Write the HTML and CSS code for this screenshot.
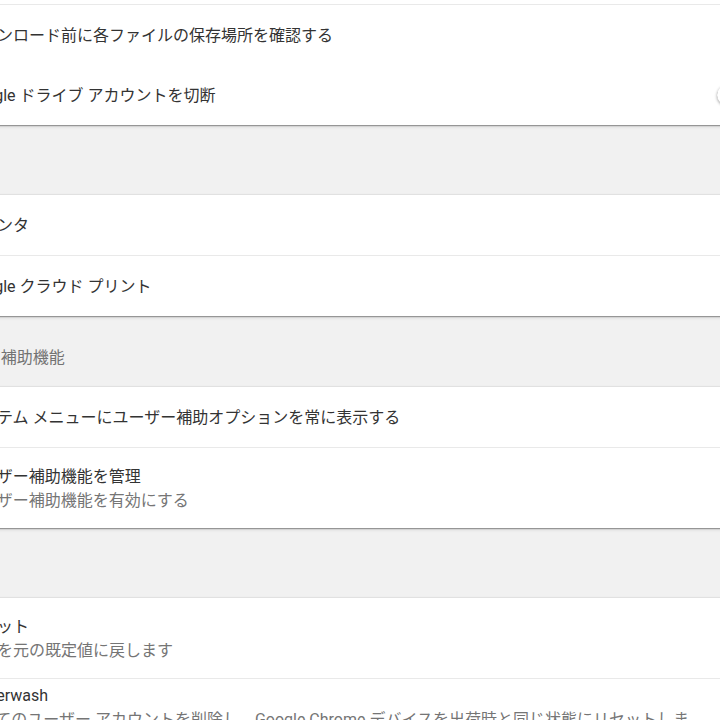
FILE: index.html
```html
<!DOCTYPE html>
<html lang="ja">
<head>
<meta charset="utf-8">
<title>設定</title>
<link rel="stylesheet" href="styles.css">
</head>
<body>
<main class="page">
  <section class="card">
    <div class="row">
      <div class="text"><div class="title">ダウンロード先</div></div>
    </div>
    <div class="row">
      <div class="text"><div class="title">ダウンロード前に各ファイルの保存場所を確認する</div></div>
    </div>
    <div class="row flush">
      <div class="text"><div class="title">Google ドライブ アカウントを切断</div></div>
      <div class="toggle"><span class="knob"></span></div>
    </div>
  </section>

  <h2 class="heading">印刷</h2>
  <section class="card">
    <div class="row">
      <div class="text"><div class="title">プリンタ</div></div>
    </div>
    <div class="row">
      <div class="text"><div class="title">Google クラウド プリント</div></div>
    </div>
  </section>

  <h2 class="heading wide">ユーザー補助機能</h2>
  <section class="card">
    <div class="row">
      <div class="text"><div class="title">システム メニューにユーザー補助オプションを常に表示する</div></div>
    </div>
    <div class="row two">
      <div class="text">
        <div class="title">ユーザー補助機能を管理</div>
        <div class="sub">ユーザー補助機能を有効にする</div>
      </div>
    </div>
  </section>

  <h2 class="heading">リセット</h2>
  <section class="card">
    <div class="row two">
      <div class="text">
        <div class="title">リセット</div>
        <div class="sub">設定を元の既定値に戻します</div>
      </div>
    </div>
    <div class="row tall">
      <div class="text">
        <div class="title">Powerwash</div>
        <div class="sub wrap">すべてのユーザー アカウントを削除し、Google Chrome デバイスを出荷時と同じ状態にリセットします。</div>
      </div>
    </div>
  </section>
</main>
</body>
</html>
```

FILE: styles.css
```css
html, body {
  margin: 0;
  padding: 0;
  overflow: hidden;
  background: #f1f1f1;
}

body {
  font-family: Roboto, "Noto Sans CJK JP", sans-serif;
  font-size: 16px;
  color: #333333;
}

.page {
  display: flex;
  flex-direction: column;
  width: 826px;
  margin: -56px 0 0 -55px;
}

.card {
  display: flex;
  flex-direction: column;
  background: #ffffff;
  box-shadow: 0 1px 1px rgba(0, 0, 0, 0.32), 0 2px 3px rgba(0, 0, 0, 0.10), 0 -1px 1px rgba(0, 0, 0, 0.06);
}

.row {
  display: flex;
  align-items: center;
  min-height: 60px;
  padding: 0 20px;
  border-top: 1px solid #e9e9e9;
}

.row:first-child,
.row.flush {
  border-top: none;
}

.row.two {
  min-height: 80px;
}

.row.tall {
  align-items: flex-start;
  padding-top: 4px;
  min-height: 76px;
}

.text {
  flex: 1;
  min-width: 0;
  display: flex;
  flex-direction: column;
  padding-top: 1px;
}

.row.tall .text {
  flex: none;
  width: 738px;
}

.title {
  line-height: 24px;
  white-space: nowrap;
}

.sub {
  line-height: 24px;
  color: #757575;
  white-space: nowrap;
}

.sub.wrap {
  white-space: normal;
}

.heading {
  margin: 0 0 0 -8px;
  padding: 29px 0 17px 0;
  font-size: 16px;
  font-weight: normal;
  line-height: 24px;
  color: #737373;
}

.heading.wide {
  padding-top: 30px;
}

.toggle {
  flex: none;
  width: 34px;
  height: 14px;
  border-radius: 7px;
  background: #bdbdbd;
  display: flex;
  align-items: center;
}

.knob {
  width: 20px;
  height: 20px;
  border-radius: 50%;
  background: #ffffff;
  box-shadow: 0 1px 3px rgba(0, 0, 0, 0.4);
}
```
